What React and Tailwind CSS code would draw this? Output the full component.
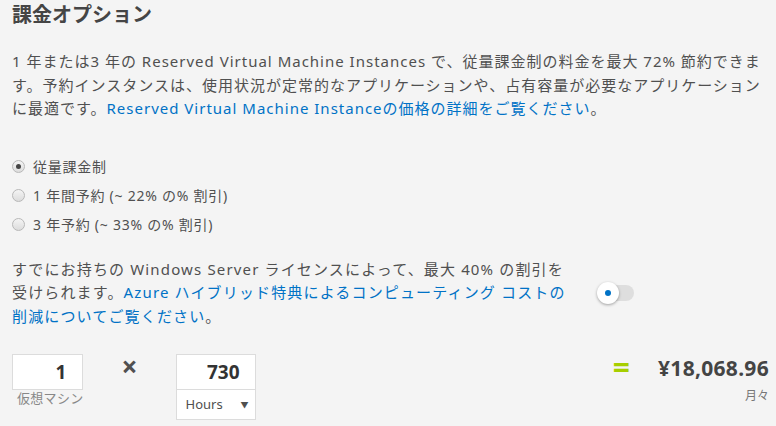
import React, { useState } from "react";

const FONT = { fontFamily: '"Noto Sans", "Noto Sans CJK JP", sans-serif' };

function Radio({ checked, label, onSelect }) {
  return (
    <label className="flex items-center h-[29px] cursor-pointer" onClick={onSelect}>
      <span className="w-[13px] h-[13px] rounded-full border border-[#b8b8b8] bg-gradient-to-b from-[#f4f4f4] to-[#dcdcdc] flex items-center justify-center">
        {checked && <span className="w-[5px] h-[5px] rounded-full bg-[#444]" />}
      </span>
      <span className="ml-[8px] text-[14px] tracking-[0.75px] text-[#505050]">{label}</span>
    </label>
  );
}

export default function App() {
  const [plan, setPlan] = useState("payg");
  const [hybrid, setHybrid] = useState(false);

  return (
    <div className="w-[776px] h-[426px] bg-[#f4f4f4] text-[#505050] overflow-hidden pl-[12px] pr-[7px]" style={FONT}>
      <h2 className="text-[20px] font-bold leading-[28px] pt-[1px] text-[#454545]">課金オプション</h2>

      <p className="mt-[21px] text-[15px] leading-[23.5px] tracking-[1px] w-[768px]">
        1 年または3 年の Reserved Virtual Machine Instances で、従量課金制の料金を最大 72% 節約できま<br />
        す。予約インスタンスは、使用状況が定常的なアプリケーションや、占有容量が必要なアプリケーション<br />
        に最適です。
        <a href="#" className="text-[#0072c6]">Reserved Virtual Machine Instanceの価格の詳細をご覧ください</a>。
      </p>

      <div className="mt-[31px] flex flex-col">
        <Radio checked={plan === "payg"} label="従量課金制" onSelect={() => setPlan("payg")} />
        <Radio checked={plan === "1y"} label="1 年間予約 (~ 22% の% 割引)" onSelect={() => setPlan("1y")} />
        <Radio checked={plan === "3y"} label="3 年予約 (~ 33% の% 割引)" onSelect={() => setPlan("3y")} />
      </div>

      <div className="mt-[19px] flex items-center">
        <p className="text-[15px] leading-[23.5px] tracking-[1.15px] w-[580px]">
          すでにお持ちの Windows Server ライセンスによって、最大 40% の割引を<br />
          受けられます。
          <a href="#" className="text-[#0072c6]">
            Azure ハイブリッド特典によるコンピューティング コストの<br />
            削減についてご覧ください
          </a>
          。
        </p>
        <button
          onClick={() => setHybrid(!hybrid)}
          className="ml-[6px] relative w-[36px] h-[16px] rounded-full bg-[#dedede]"
        >
          <span className="absolute left-[-1px] top-[-3px] w-[22px] h-[22px] rounded-full bg-white shadow-[0_1px_3px_rgba(0,0,0,0.35)] flex items-center justify-center">
            <span className="w-[6px] h-[6px] rounded-full bg-[#0072c6]" />
          </span>
        </button>
      </div>

      <div className="mt-[26px] flex items-start">
        <div className="flex flex-col items-center">
          <div className="w-[71px] h-[36px] bg-white border border-[#dcdcdc] flex items-center justify-end pr-[16px] text-[19px] font-bold text-[#333]">1</div>
          <span className="text-[13px] text-[#888] leading-[16px] tracking-[0.3px] self-start ml-[5px]">仮想マシン</span>
        </div>
        <div className="w-[92px] h-[24px] flex items-center justify-center text-[28px] leading-[28px] text-[#505050] font-bold">×</div>
        <div className="w-[80px] flex flex-col bg-white border border-[#dcdcdc]">
          <div className="h-[35px] flex items-center justify-end pr-[15px] text-[19px] font-bold text-[#333] border-b border-[#dcdcdc]">730</div>
          <div className="h-[29px] flex items-center justify-between pl-[9px] pr-[6px] text-[13px] text-[#505050]">
            <span>Hours</span>
            <span className="text-[8px]">▼</span>
          </div>
        </div>
        <div className="flex-1 flex justify-end mt-[-1px] mr-[28px]">
          <span className="text-[#a6ce00] text-[30px] font-bold leading-[28px]">=</span>
        </div>
        <div className="flex flex-col items-end">
          <span className="text-[21px] font-bold text-[#444] leading-[28px] tracking-[0.3px]">¥18,068.96</span>
          <span className="mt-[5px] text-[12px] text-[#777]">月々</span>
        </div>
      </div>
    </div>
  );
}
